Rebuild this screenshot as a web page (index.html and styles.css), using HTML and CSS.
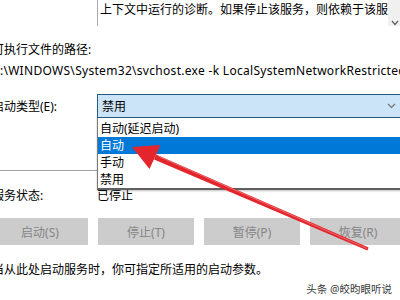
FILE: index.html
```html
<!DOCTYPE html>
<html>
<head>
<meta charset="utf-8">
<link rel="stylesheet" href="styles.css">
</head>
<body>
	<div class="page">
		<div class="desc">
			<div class="desc-box">
				<div class="desc-text">上下文中运行的诊断。如果停止该服务，则依赖于该服</div>
				<div class="scroll">
					<svg width="8" height="6" viewBox="0 0 8 6"><path d="M1 1 L4 4.5 L7 1" fill="none" stroke="#606060" stroke-width="1.2"/></svg>
				</div>
			</div>
		</div>
		<div class="line path-label">可执行文件的路径:</div>
		<div class="line path">C:\WINDOWS\System32\svchost.exe -k LocalSystemNetworkRestricted</div>
		<div class="startup">
			<span class="col-label">启动类型(E):</span>
			<div class="combo-wrap">
				<div class="combo">
					<span>禁用</span>
					<svg width="9" height="6" viewBox="0 0 9 6"><path d="M1 1 L4.5 4.5 L8 1" fill="none" stroke="#707070" stroke-width="1.1"/></svg>
				</div>
				<ul class="list">
					<li>自动(延迟启动)</li>
					<li class="sel">自动</li>
					<li>手动</li>
					<li>禁用</li>
				</ul>
			</div>
		</div>
		<div class="sep"></div>
		<div class="line status">
			<span class="col-label">服务状态:</span>
			<span>已停止</span>
		</div>
		<div class="buttons">
			<button>启动(S)</button>
			<button>停止(T)</button>
			<button>暂停(P)</button>
			<button>恢复(R)</button>
		</div>
		<div class="line hint">当从此处启动服务时，你可指定所适用的启动参数。</div>
		<div class="mark">头条 @皎昀眼听说</div>
	</div>
	<svg class="arrow" width="400" height="300" viewBox="0 0 400 300">
		<polygon points="156,154.4 154,159.6 367.4,250.4 368.6,247.6" fill="#e2262c"/>
		<polygon points="132,147 160.5,145 149.5,169" fill="#e2262c"/>
		<line x1="158" y1="156" x2="367" y2="248.5" stroke="#f07a7e" stroke-width="0.8"/>
	</svg>
</body>
</html>
```

FILE: styles.css
```css
body {
	margin: 0;
	width: 400px;
	height: 300px;
	overflow: hidden;
	position: relative;
	background-color: #fff;
	color: #000;
	font-family: "Noto Sans", "Noto Sans CJK SC", sans-serif;
	font-size: 12px;
}

.page {
	margin-left: -8px;
	width: 416px;
}

.line {
	height: 16px;
	line-height: 16px;
	white-space: nowrap;
}

.desc {
	height: 26px;
	padding-left: 105px;
}

.desc-box {
	display: flex;
	height: 26px;
	border-left: 1px solid #a8a8a8;
}

.desc-text {
	flex: 1;
	padding: 2px 0 0 2px;
	line-height: 16px;
	white-space: nowrap;
	overflow: hidden;
}

.scroll {
	width: 20px;
	background-color: #f0f0f0;
	padding: 13px 0 0 3px;
	box-sizing: border-box;
}

.path-label {
	margin-top: 16px;
}

.path {
	margin-top: 5px;
	letter-spacing: 0.3px;
}

.startup {
	display: flex;
	margin-top: 15px;
	height: 24px;
	align-items: center;
}

.col-label {
	width: 105px;
	flex-shrink: 0;
}

.combo-wrap {
	position: relative;
	flex: 1;
	height: 24px;
}

.combo {
	display: flex;
	align-items: center;
	justify-content: space-between;
	height: 24px;
	box-sizing: border-box;
	padding: 0 11px 0 4px;
	background-color: #cce4f7;
	border: 1px solid #2a5a80;
}

.list {
	position: absolute;
	top: 24px;
	left: 0;
	right: 0;
	margin: 0;
	padding: 2px 0 0;
	list-style: none;
	background-color: #fff;
	border: 1px solid #7a7a7a;
	border-top: none;
	border-bottom: 2px solid #606060;
	box-shadow: 0 1px 2px rgba(0, 0, 0, 0.25);
	z-index: 2;
}

.list li {
	height: 17px;
	line-height: 17px;
	padding-left: 2px;
	white-space: nowrap;
}

.list li.sel {
	background-color: #0078d7;
	color: #fff;
}

.sep {
	margin-top: 52px;
	height: 1px;
	background-color: #a0a0a0;
}

.status {
	display: flex;
	margin-top: 17px;
}

.buttons {
	display: flex;
	gap: 10px;
	margin-top: 14px;
}

.buttons button {
	width: 96px;
	height: 27px;
	padding: 0;
	border: none;
	background-color: #cccccc;
	color: #858585;
	font-family: inherit;
	font-size: 12px;
}

.hint {
	margin-top: 17px;
}

.mark {
	margin-top: 4px;
	padding-right: 16px;
	text-align: right;
	height: 14px;
	line-height: 14px;
	font-size: 10.5px;
	color: #3a3a3a;
	text-shadow: 0 0 2px #fff;
}

.arrow {
	position: absolute;
	left: 0;
	top: 0;
	z-index: 3;
}
```
